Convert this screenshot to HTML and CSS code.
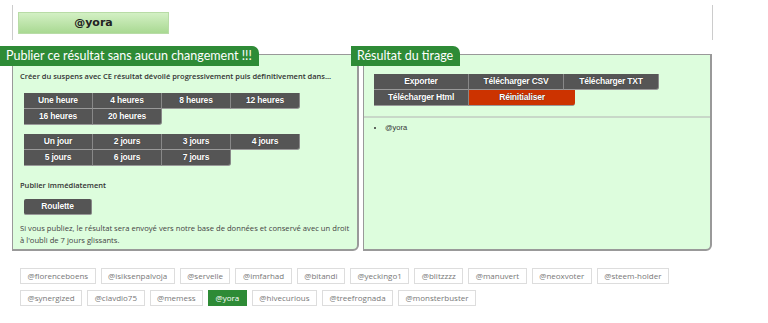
FILE: index.html
```html
<!DOCTYPE html>
<html lang="fr">
<head>
    <meta charset="UTF-8">
    <meta name="viewport" content="width=device-width, initial-scale=1.0">
    <title>Résultat du tirage</title>
    <link rel="stylesheet" href="styles.css">
</head>
<body>
    <div class="top">
        <div class="winner">@yora</div>
    </div>

    <div class="panels">
        <div class="panel panel-left">
            <h3 class="tab">Publier ce résultat sans aucun changement !!!</h3>
            <p class="intro">Créer du suspens avec CE résultat dévoilé progressivement puis définitivement dans...</p>

            <div class="btn-grid">
                <a class="btn">Une heure</a>
                <a class="btn">4 heures</a>
                <a class="btn">8 heures</a>
                <a class="btn last">12 heures</a>
                <a class="btn">16 heures</a>
                <a class="btn last">20 heures</a>
            </div>

            <div class="btn-grid second">
                <a class="btn">Un jour</a>
                <a class="btn">2 jours</a>
                <a class="btn">3 jours</a>
                <a class="btn last">4 jours</a>
                <a class="btn">5 jours</a>
                <a class="btn">6 jours</a>
                <a class="btn last">7 jours</a>
            </div>

            <p class="intro now">Publier immédiatement</p>
            <a class="btn roulette">Roulette</a>

            <p class="note">Si vous publiez, le résultat sera envoyé vers notre base de données et conservé avec un droit à l'oubli de 7 jours glissants.</p>
        </div>

        <div class="panel panel-right">
            <h3 class="tab">Résultat du tirage</h3>
            <div class="export">
                <a class="btn">Exporter</a>
                <a class="btn">Télécharger CSV</a>
                <a class="btn last">Télécharger TXT</a>
                <a class="btn">Télécharger Html</a>
                <a class="btn reset">Réinitialiser</a>
            </div>
            <ul class="winners">
                <li>@yora</li>
            </ul>
        </div>
    </div>

    <div class="tags">
        <span class="tag">@florenceboens</span>
        <span class="tag">@isiksenpalvoja</span>
        <span class="tag">@servelle</span>
        <span class="tag">@imfarhad</span>
        <span class="tag">@bitandi</span>
        <span class="tag">@yeckingo1</span>
        <span class="tag">@blitzzzz</span>
        <span class="tag">@manuvert</span>
        <span class="tag">@neoxvoter</span>
        <span class="tag">@steem-holder</span>
        <span class="tag">@synergized</span>
        <span class="tag">@clavdio75</span>
        <span class="tag">@memess</span>
        <span class="tag active">@yora</span>
        <span class="tag">@hivecurious</span>
        <span class="tag">@treefrognada</span>
        <span class="tag">@monsterbuster</span>
    </div>
</body>
</html>
```

FILE: styles.css
```css
body {
    margin: 0;
    font-family: 'Open Sans', 'DejaVu Sans', sans-serif;
    color: #333;
    background: #fff;
}

.top {
    box-sizing: border-box;
    margin: 5px 0 0 12px;
    padding: 7px 0 0 5px;
    width: 701px;
    height: 35px;
    border-left: 1px solid #ccc;
    border-right: 1px solid #ccc;
}

.winner {
    width: 149px;
    height: 20px;
    line-height: 20px;
    text-align: center;
    font-family: 'DejaVu Sans', sans-serif;
    font-weight: bold;
    font-size: 11px;
    color: #222;
    background: linear-gradient(#d3f0c4, #a9d992);
    border: 1px solid #b8dca6;
}

.panels {
    display: flex;
    margin-top: 14px;
}

.panel {
    box-sizing: border-box;
    height: 197px;
    background: #ddfddd;
    border: 1px solid #999;
    border-right-width: 2px;
    border-bottom-width: 2px;
    border-bottom-right-radius: 6px;
}

.panel-left {
    margin-left: 12px;
    width: 347px;
    padding: 0 7px;
}

.panel-right {
    margin-left: 4px;
    width: 349px;
}

.tab {
    display: block;
    width: fit-content;
    margin: -9px 0 0 -13px;
    height: 20px;
    line-height: 20px;
    padding: 0 7px 0 6px;
    background: #2e8b36;
    color: #fff;
    font-family: 'Lato', sans-serif;
    font-weight: normal;
    font-size: 12.5px;
    border-top-right-radius: 7px;
}

.panel-left .tab {
    margin-left: -20px;
}

.intro {
    margin: 5px 0 0;
    font-size: 7.5px;
    line-height: 10px;
    font-weight: 600;
    color: #333;
}

.btn-grid {
    display: grid;
    grid-template-columns: repeat(4, 69px);
    margin: 12px 0 0 4px;
}

.btn-grid.second {
    margin-top: 9px;
}

.btn {
    display: block;
    box-sizing: border-box;
    height: 16px;
    line-height: 15px;
    text-align: center;
    background: #555;
    color: #fff;
    font-family: 'Liberation Sans', Arial, sans-serif;
    font-weight: bold;
    font-size: 8.5px;
    letter-spacing: -0.2px;
    text-shadow: 0 0 1px #222;
    border-right: 1px solid #888;
    border-bottom: 1px solid #999;
}

.btn.last {
    border-bottom-right-radius: 3px;
}

.now {
    margin-top: 14px;
}

.roulette {
    width: 68px;
    margin: 9px 0 0 4px;
    border-radius: 2px;
}

.note {
    margin: 7px 0 0;
    font-size: 7.65px;
    line-height: 12px;
    color: #444;
}

.export {
    display: flex;
    flex-wrap: wrap;
    width: 285px;
    margin: 8px 0 0 10px;
}

.export .btn {
    width: 95px;
}

.export .btn.reset {
    width: 106px;
    background: #cc3300;
    border-right: none;
    border-bottom-right-radius: 3px;
}

.winners {
    margin: 10px 0 0;
    padding: 5px 0 0 21px;
    border-top: 2px solid #c8d8c8;
    font-family: 'Liberation Sans', Arial, sans-serif;
    font-size: 7.5px;
    color: #333;
}

.tags {
    display: flex;
    flex-wrap: wrap;
    gap: 6px 5px;
    margin: 17px 0 0 20px;
    width: 670px;
}

.tag {
    box-sizing: border-box;
    height: 16px;
    line-height: 14px;
    padding: 0 6.5px;
    border: 1px solid #ddd;
    color: #777;
    font-size: 8px;
}

.tag.active {
    background: #2e8b36;
    border-color: #2e8b36;
    color: #fff;
}
```
